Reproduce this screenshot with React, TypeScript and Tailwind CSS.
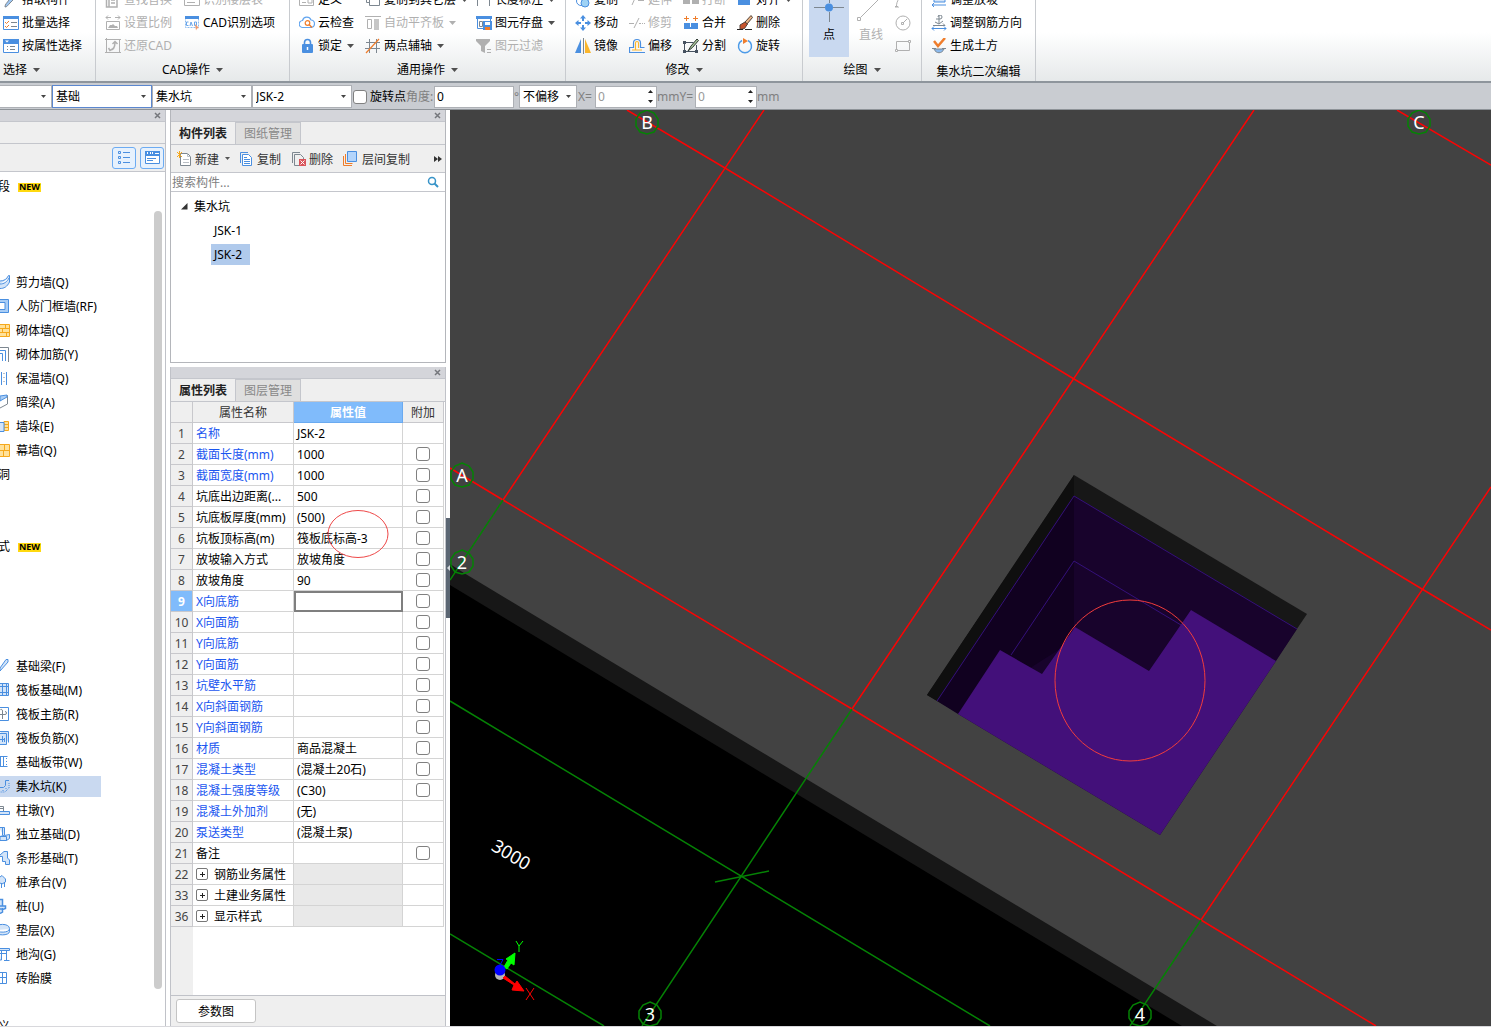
import clsx from 'clsx'
import React from 'react'

const BLUE = '#4a8fe0'
const SOFT = '#d3e4f8'
const GRAY = '#b0b0b0'
const SLATE = '#7d8790'
const ORANGE = '#ef7d2b'

function Caret({ muted = false }: { muted?: boolean }) {
  return (
    <svg width="7" height="4" viewBox="0 0 7 4" className="shrink-0">
      <path d="M0 0h7L3.5 4z" fill={muted ? GRAY : '#4f4f4f'} />
    </svg>
  )
}

function Icon({ children, size = 16 }: { children: React.ReactNode; size?: number }) {
  return (
    <svg width={size} height={size} viewBox="0 0 16 16" fill="none" className="shrink-0">
      {children}
    </svg>
  )
}

const icons: Record<string, React.ReactNode> = {
  pick: <path d="M2 15c0-3 2-4 4-7l6-6 2 2-7 7c-2 2-3 4-5 4z" fill="#9ec6f2" stroke={SLATE} />,
  batch: (
    <>
      <path d="M.5 1.500h15v13H.5z" fill="#fff" stroke={BLUE} />
      <path d="M0 1h16v3H0z" fill={BLUE} />
      <path d="M2 7l1.500 1.500L6 6M2 11l1.500 1.500L6 10" stroke={ORANGE} />
      <path d="M8 7.500h6M8 11.500h6" stroke={SLATE} />
    </>
  ),
  attr: (
    <>
      <path d="M.5 1.500h15v13H.5z" fill="#fff" stroke={BLUE} />
      <path d="M0 1h16v5H0z" fill={BLUE} />
      <path d="M2 2.500h4L4 4.500z" fill="#fff" />
      <path d="M4 8.500h1M7 8.500h5M4 11.500h1M7 11.500h5" stroke={SLATE} />
    </>
  ),
  find: <path d="M4 1h8v14H4zM6 5h4M6 8h4M6 11h4M1.500 4v11h2" stroke={GRAY} strokeWidth="1.500" />,
  scale: (
    <>
      <path d="M1 2.500h5M3 .5l-2 2 2 2M10 2.500h5M13 .5l2 2-2 2M1.500 6.500h13v8h-13z" stroke={GRAY} />
      <path d="M3 13l2-3h2l1-1 2 2h2l1 2z" fill={GRAY} />
    </>
  ),
  restore: (
    <>
      <path d="M1.500 0v15M0 1.500h16M14.500 1.500v13M0 14.500h16" stroke={GRAY} />
      <path d="M5 12c4 0 5-3 5-8M7.500 6L10 3.500 12.500 6M3.500 10L5 12.500 7.500 11" stroke={GRAY} strokeWidth="1.500" />
    </>
  ),
  floors: <path d="M.5 3.500h15v10H.5zM3 7.500h4M3 10.500h8M9 7.500h4" stroke={GRAY} />,
  cadopt: (
    <>
      <path d="M1.500 1.500h13v11h-13z" fill="#fff" stroke="#8dbbee" strokeDasharray="2 1" />
      <path d="M1 1h14v3H1z" fill={BLUE} />
      <path d="M4.500 7h-2v3.500h2M6 11l1-4 1.500 4M10.500 7h2v3.500h-2z" stroke="#6aa6ea" />
      <path d="M11 9l4 4-2 .5-1 2z" fill="#f19a6b" />
    </>
  ),
  define: <path d="M.5 1.500h14v12H.5zM3 10.500h4M9 7h4v4H9z" stroke={GRAY} />,
  cloud: (
    <>
      <path d="M4 12.500a3.500 3.500 0 0 1-.5-7A4.500 4.500 0 0 1 12 5a3.800 3.800 0 0 1 .5 7.500z" fill="#fff" stroke="#62a5ef" strokeWidth="1.200" />
      <circle cx="8.500" cy="8" r="2.300" stroke={ORANGE} strokeWidth="1.200" />
      <path d="M10 9.500l3 3" stroke={ORANGE} strokeWidth="1.400" />
    </>
  ),
  lock: (
    <>
      <path d="M5.500 7V4.500a3 3 0 0 1 6 0V7" stroke={BLUE} strokeWidth="1.600" />
      <rect x="3" y="6" width="11" height="9" rx="1" fill={BLUE} />
      <path d="M8.500 9v3" stroke="#fff" strokeWidth="1.500" />
    </>
  ),
  copyTo: <path d="M1.500 4V10.500H5M4.500 1.500h10v12h-10z" stroke={SLATE} />,
  align: (
    <>
      <path d="M0 1.500h16M2.500 4.500h4v9h-4z" stroke={GRAY} />
      <path d="M9 4h5v11H9z" fill="#c6c6c6" />
    </>
  ),
  axis: (
    <>
      <path d="M4.500 1v14M11.500 1v14M1 4.500h14M0 10.500h15" stroke={SLATE} />
      <path d="M1 15L14 1" stroke={ORANGE} strokeWidth="1.200" />
    </>
  ),
  dim: <path d="M1.500 4v10M13.500 4v10M1.500 5.500h12" stroke={SLATE} />,
  save: (
    <>
      <path d="M1.500 1.500h13v12h-13z" fill="#fff" stroke={BLUE} />
      <path d="M0 1h16v3H0z" fill={BLUE} />
      <path d="M3.500 6.500h3v5h-3z" stroke={SLATE} />
      <path d="M7 6h9v9H7z" fill={BLUE} />
      <path d="M9 7h5v3H9z" fill="#fff" />
      <path d="M9 12h5v3H9z" fill={ORANGE} />
    </>
  ),
  filter: (
    <>
      <path d="M0 1h14v2L9 8v7l-4-2V8L0 3z" fill={GRAY} />
      <path d="M11 11.500h4M11 14.500h4" stroke={GRAY} />
    </>
  ),
  copy: (
    <>
      <circle cx="6" cy="9" r="4.500" stroke={BLUE} />
      <circle cx="10" cy="11" r="4" fill="#9ed2f5" stroke={BLUE} />
    </>
  ),
  move: (
    <path
      d="M8 0l3 3.500H9V6H7V3.500H5zM8 16l3-3.500H9V10H7v2.500H5zM0 8l3.500-3v2H6v2H3.500v2zM16 8l-3.500-3v2H10v2h2.500v2z"
      fill={BLUE}
    />
  ),
  mirror: (
    <>
      <path d="M6 1v14H0z" fill={BLUE} />
      <path d="M10 1v14h6z" fill="#fbb62c" />
      <path d="M8.500 0v16" stroke={SLATE} />
    </>
  ),
  extend: <path d="M3 13L7 4M9 8.500h6" stroke={GRAY} />,
  trim: <path d="M0 8.500h5M5 13l5-10M10 8.500h2M13 8.500h1M15 8.500h1" stroke={GRAY} />,
  offset: (
    <>
      <path d="M0 14.500h16M.5 14V9.500H4.500V5a3.500 3.500 0 0 1 7 0v4.500h4" stroke={BLUE} strokeWidth="1.200" />
      <path d="M3 12h10M6.500 12V5a1.500 1.500 0 0 1 3 0v5" stroke="#fbb62c" strokeWidth="1.200" />
    </>
  ),
  breakIt: <path d="M0 2h7v10H0zM9 2h7v10H9z" fill={GRAY} />,
  merge: (
    <>
      <path d="M1 8h6v5H1zM8 8h7v5H8z" fill={BLUE} />
      <path d="M1 3.500h5M3.500 1v5M10 3.500h5M12.500 1v5" stroke={ORANGE} />
      <path d="M1 13h14" stroke={BLUE} strokeWidth="2" />
    </>
  ),
  split: (
    <>
      <path d="M1.500 4.500h9M13.500 7v6.500h-12v-9" stroke="#46515f" />
      <path d="M0 3h3v3H0zM0 12h3v3H0zM12 12h3v3h-3z" fill="#46515f" />
      <path d="M5 13L8 8l6-7 1.500 1.500-6 7z" fill="#a8c49a" stroke="#303a33" />
    </>
  ),
  alignTo: <path d="M1 2h12v11H1z" fill={BLUE} />,
  erase: (
    <>
      <path d="M8 7l6-6.500 1.500 2L10 9z" fill="#e9b384" stroke="#54433a" />
      <path d="M3 10l5-3 2.500 2-3 4.500-4.500 1z" fill="#c7532c" stroke="#54433a" />
      <path d="M0 14.500h6M8 14.500h7" stroke="#222" />
    </>
  ),
  rotate: (
    <>
      <path d="M5 2.500a6.500 6.500 0 1 0 6 0" stroke="#4c9be8" strokeWidth="1.500" />
      <path d="M6 0l5 3-5 3z" fill={ORANGE} />
    </>
  ),
  slope: <path d="M3 3h11v7H3zM1 13h14M3 11l-2 2 2 2" fill={SOFT} stroke={BLUE} />,
  rebar: (
    <>
      <path d="M8 0v9M5 4h4a2 2 0 1 0-2-2M4 7l4 2 4-3" stroke={SLATE} />
      <path d="M2 10.500h12M12 8.500l2 2" stroke={SLATE} />
      <path d="M1 13.500h14M3 11.500l-2 2 2 2M13 11.500l2 2-2 2" stroke={BLUE} />
    </>
  ),
  earth: (
    <>
      <path d="M3 3l4 5 7-8" stroke={ORANGE} strokeWidth="2.500" />
      <path d="M1 10.500h4M11 10.500h4" stroke={SLATE} />
      <path d="M3 11c2 5 8 5 10 0z" fill="#8bb9ec" stroke={SLATE} />
    </>
  ),
}

type Tool = { icon: string; text: string; off?: boolean; menu?: boolean }

function ToolColumn({ tools, className }: { tools: Tool[]; className?: string }) {
  return (
    <div className={clsx('flex shrink-0 flex-col', className)}>
      {tools.map((tool) => (
        <button key={tool.text} className={clsx('flex h-[23px] items-center gap-[3px] whitespace-nowrap', tool.off && 'text-[#b0b0b0]')}>
          <Icon>{icons[tool.icon]}</Icon>
          <span>{tool.text}</span>
          {tool.menu && (
            <span className="ml-[2px]">
              <Caret muted={tool.off} />
            </span>
          )}
        </button>
      ))}
    </div>
  )
}

function Group({ title, menu = true, className, children }: { title: string; menu?: boolean; className: string; children: React.ReactNode }) {
  return (
    <section className={clsx('flex shrink-0 flex-col border-r border-[#c8cbcf]', className)}>
      <div className="flex h-[69px]">{children}</div>
      <button className={clsx('flex h-[25px] items-center justify-center gap-[6px] self-stretch whitespace-nowrap', !menu && 'pt-1')}>
        {title}
        {menu && <Caret />}
      </button>
    </section>
  )
}

function Ribbon() {
  return (
    <header className="h-[83px] shrink-0 overflow-hidden border-b-2 border-[#8e959c] bg-linear-to-b from-white from-40% to-[#e6e9ea]">
      <div className="-mt-3 flex">
        <Group title="选择" className="w-24 pr-[52px]">
          <ToolColumn
            className="pl-[3px]"
            tools={[
              { icon: 'pick', text: '拾取构件' },
              { icon: 'batch', text: '批量选择' },
              { icon: 'attr', text: '按属性选择' },
            ]}
          />
        </Group>
        <Group title="CAD操作" className="w-[194px]">
          <ToolColumn
            className="w-[88px] pl-[9px]"
            tools={[
              { icon: 'find', text: '查找替换', off: true },
              { icon: 'scale', text: '设置比例', off: true },
              { icon: 'restore', text: '还原CAD', off: true },
            ]}
          />
          <ToolColumn
            tools={[
              { icon: 'floors', text: '识别楼层表', off: true },
              { icon: 'cadopt', text: 'CAD识别选项' },
            ]}
          />
        </Group>
        <Group title="通用操作" className="w-[276px]">
          <ToolColumn
            className="w-[75px] pl-[9px]"
            tools={[
              { icon: 'define', text: '定义' },
              { icon: 'cloud', text: '云检查' },
              { icon: 'lock', text: '锁定', menu: true },
            ]}
          />
          <ToolColumn
            className="w-[111px]"
            tools={[
              { icon: 'copyTo', text: '复制到其它层', menu: true },
              { icon: 'align', text: '自动平齐板', off: true, menu: true },
              { icon: 'axis', text: '两点辅轴', menu: true },
            ]}
          />
          <ToolColumn
            tools={[
              { icon: 'dim', text: '长度标注', menu: true },
              { icon: 'save', text: '图元存盘', menu: true },
              { icon: 'filter', text: '图元过滤', off: true },
            ]}
          />
        </Group>
        <Group title="修改" className="w-[237px]">
          <ToolColumn
            className="w-[63px] pl-[9px]"
            tools={[
              { icon: 'copy', text: '复制' },
              { icon: 'move', text: '移动' },
              { icon: 'mirror', text: '镜像' },
            ]}
          />
          <ToolColumn
            className="w-[54px]"
            tools={[
              { icon: 'extend', text: '延伸', off: true },
              { icon: 'trim', text: '修剪', off: true },
              { icon: 'offset', text: '偏移' },
            ]}
          />
          <ToolColumn
            className="w-[54px]"
            tools={[
              { icon: 'breakIt', text: '打断', off: true },
              { icon: 'merge', text: '合并' },
              { icon: 'split', text: '分割' },
            ]}
          />
          <ToolColumn
            tools={[
              { icon: 'alignTo', text: '对齐', menu: true },
              { icon: 'erase', text: '删除' },
              { icon: 'rotate', text: '旋转' },
            ]}
          />
        </Group>
        <Group title="绘图" className="w-[119px]">
          <button className="ml-[6px] flex w-10 flex-col items-center justify-end gap-[5px] bg-[#c9d9f0] pb-[14px]">
            <svg width="30" height="30" viewBox="0 0 30 30" className="shrink-0">
              <path d="M0 15.500h11M19 15.500h11M15.500 0v11M15.500 20v10" stroke={SLATE} />
              <circle cx="15" cy="15.500" r="4" fill={BLUE} />
            </svg>
            <span>点</span>
          </button>
          <button className="ml-[6px] flex w-8 flex-col items-center justify-end gap-[5px] pb-[14px] text-[#b0b0b0]">
            <svg width="30" height="30" viewBox="0 0 30 30" className="shrink-0" fill="none" stroke={GRAY}>
              <path d="M5 25L27 3M1.500 25.500h3v3h-3z" />
            </svg>
            <span>直线</span>
          </button>
          <div className="ml-2 flex flex-col">
            <button aria-label="弧" className="flex h-[23px] items-center">
              <Icon>
                <path d="M1.500 15.500C1 8 6 3 12 2M0 14.500h3v3H0z" stroke={GRAY} />
              </Icon>
            </button>
            <button aria-label="圆" className="flex h-[23px] items-center">
              <Icon>
                <circle cx="8" cy="8" r="7" stroke={GRAY} />
                <path d="M6.500 7.500h2v2h-2zM8 8l4-4" stroke={GRAY} />
              </Icon>
            </button>
            <button aria-label="矩形" className="flex h-[23px] items-center">
              <Icon>
                <path d="M1.500 3.500h13v9h-13z" stroke={GRAY} />
                <path d="M.5 11.500h2v2h-2zM13.500 2.500h2v2h-2z" fill="#fff" stroke={GRAY} />
              </Icon>
            </button>
          </div>
        </Group>
        <Group title="集水坑二次编辑" menu={false} className="w-[114px]">
          <ToolColumn
            className="pl-[9px]"
            tools={[
              { icon: 'slope', text: '调整放坡' },
              { icon: 'rebar', text: '调整钢筋方向' },
              { icon: 'earth', text: '生成土方' },
            ]}
          />
        </Group>
      </div>
    </header>
  )
}

function Combo({ value, label, className }: { value: string; label: string; className: string }) {
  return (
    <span className={clsx('relative flex h-[23px] shrink-0 border bg-white', className)}>
      <select aria-label={label} defaultValue={value} className="w-full appearance-none bg-transparent pt-px pl-[3px] outline-none">
        <option>{value}</option>
      </select>
      <span className="pointer-events-none absolute top-[9px] right-[5px]">
        <svg width="5" height="3" viewBox="0 0 5 3" className="block">
          <path d="M0 0h5L2.500 3z" fill="#444" />
        </svg>
      </span>
    </span>
  )
}

function Spinner({ label }: { label: string }) {
  return (
    <span className="flex h-[22px] w-[62px] shrink-0 border border-[#adb0b5] bg-white">
      <input aria-label={label} defaultValue="0" className="w-12 pt-px pl-[2px] text-[#9a9a9a] outline-none" />
      <span className="flex flex-1 flex-col items-center justify-center gap-[7px]">
        <button aria-label={label + '加'}>
          <svg width="5" height="3" viewBox="0 0 5 3" className="block">
            <path d="M0 3h5L2.500 0z" fill="#222" />
          </svg>
        </button>
        <button aria-label={label + '减'}>
          <svg width="5" height="3" viewBox="0 0 5 3" className="block">
            <path d="M0 0h5L2.500 3z" fill="#222" />
          </svg>
        </button>
      </span>
    </span>
  )
}

function OptionsBar() {
  return (
    <div className="flex h-[27px] shrink-0 items-center overflow-hidden border-b border-[#8e9398] bg-[#c9ccd1] pt-px whitespace-nowrap text-[#808080]">
      <div className="flex text-black">
        <Combo label="楼层" value="" className="w-[52px] border-l-0 border-[#adb0b5]" />
        <Combo label="类别" value="基础" className="w-[100px] border-[#5b87cf]" />
        <Combo label="类型" value="集水坑" className="w-[100px] border-[#adb0b5]" />
        <Combo label="构件" value="JSK-2" className="w-[100px] border-[#adb0b5]" />
      </div>
      <label className="ml-[1px] flex items-center gap-[3px] text-black">
        <input type="checkbox" className="size-[14px] appearance-none rounded-[3px] border border-[#808080] bg-white" />
        旋转点
      </label>
      <label className="flex items-center">
        <span className="w-7">角度:</span>
        <input defaultValue="0" className="h-[22px] w-20 border border-[#adb0b5] bg-white pl-[2px] text-black outline-none" />
      </label>
      <span className="w-[5px]">°</span>
      <Combo label="偏移方式" value="不偏移" className="w-[58px] border-[#adb0b5] text-black" />
      <span className="w-[18px] pl-[1px]">X=</span>
      <Spinner label="X偏移" />
      <span className="w-[38px]">mmY=</span>
      <Spinner label="Y偏移" />
      <span>mm</span>
    </div>
  )
}

function CloseButton() {
  return (
    <button aria-label="关闭" className="mr-1">
      <svg width="7" height="7" viewBox="0 0 7 7" className="block">
        <path d="M1 1l5 5M6 1L1 6" stroke="#75777c" strokeWidth="1.500" />
      </svg>
    </button>
  )
}

function TitleStrip() {
  return (
    <div className="flex h-3 shrink-0 items-center justify-end border-b border-[#c4c6cc] bg-[#d4d5da]">
      <CloseButton />
    </div>
  )
}

type NavItem = { text?: string; stub?: string; fresh?: boolean; icon?: React.ReactNode; current?: boolean }

// only the right part of each glyph is inside the window, the rest is scrolled away
const navItems: NavItem[] = [
  { stub: '段', fresh: true },
  {},
  {},
  {},
  { text: '剪力墙(Q)', icon: <path d="M0 7C4 7 7 5 8.500 1.500h1V8C7 13 4 14.500 0 14.500M0 10c4 0 7-2 9-6" fill={SOFT} stroke={BLUE} /> },
  {
    text: '人防门框墙(RF)',
    icon: (
      <>
        <path d="M-4 1.500H8.500v13H-4z" fill="#a9cdf5" stroke={BLUE} />
        <path d="M-4 4.500h9v7h-9z" fill="#fff" stroke={BLUE} />
      </>
    ),
  },
  { text: '砌体墙(Q)', icon: <path d="M-4 2.500H9.500v12H-4zM0 6.500h9.500M0 10.500h9.500M5.500 2.500v4M2.500 6.500v4M6.500 10.500v4" fill="#ffe19a" stroke="#f5a81c" /> },
  {
    text: '砌体加筋(Y)',
    icon: (
      <>
        <path d="M0 1.500h8.500V16" stroke={SLATE} />
        <path d="M0 4.500h5.500V15M0 7.500h2.500V15" stroke={BLUE} />
      </>
    ),
  },
  {
    text: '保温墙(Q)',
    icon: (
      <>
        <path d="M1.500 2v13M6.500 2v13" stroke={BLUE} />
        <path d="M4 3v1M4 7v1M4 11v1" stroke={SLATE} />
      </>
    ),
  },
  {
    text: '暗梁(A)',
    icon: (
      <>
        <path d="M0 6l7.500-4.500V10L0 14" fill="#fff" stroke={SLATE} />
        <path d="M0 2l7-1v2L0 7z" fill="#a9cdf5" stroke={BLUE} />
      </>
    ),
  },
  {
    text: '墙垛(E)',
    icon: (
      <>
        <path d="M4 3.500h4.500v9H4zM4 6.500h4.500M4 9.500h4.500" fill="#ffe19a" stroke="#f5a81c" />
        <path d="M-2 4.500h6v9h-6z" fill={SOFT} stroke={BLUE} />
      </>
    ),
  },
  { text: '幕墙(Q)', icon: <path d="M-4 2.500H9.500v12H-4zM0 8.500h9.500M4.500 2.500v6M3.500 8.500v6" fill="#ffe19a" stroke="#f5a81c" /> },
  { stub: '洞' },
  {},
  {},
  { stub: '式', fresh: true },
  {},
  {},
  {},
  {},
  { text: '基础梁(F)', icon: <path d="M0 10l6-8.500h2V4L0 13z" fill={SOFT} stroke={BLUE} /> },
  { text: '筏板基础(M)', icon: <path d="M-4 1.500H8.500v12H-4zM0 4.500h8.500M0 10.500h8.500M2.500 1.500v12M6.500 1.500v12" fill={SOFT} stroke={BLUE} /> },
  {
    text: '筏板主筋(R)',
    icon: (
      <>
        <path d="M-4 1.500H8.500v13H-4z" fill="#fff" stroke={BLUE} />
        <path d="M0 8.500h5a1.500 1.500 0 0 0 0-3M2.500 13V5c0-2-2-2-2-1" stroke={SLATE} />
      </>
    ),
  },
  { text: '筏板负筋(X)', icon: <path d="M-4 3.500H6.500v11H-4zM0 1.500h8.500v11M-1 9.500h5M2.500 6v6M4.500 8v4" fill={SOFT} stroke={BLUE} /> },
  { text: '基础板带(W)', icon: <path d="M-2 2.500H7.500M-2 12.500H7.500M.5 2.500v10M3.500 2.500v10M6.500 4v1M6.500 7v1M6.500 10v1" fill={SOFT} stroke={BLUE} /> },
  {
    text: '集水坑(K)',
    current: true,
    icon: (
      <>
        <path d="M9 2.500H5.500v5l-2 2H0" stroke={BLUE} />
        <path d="M9 5v5l-4 4H0M6 10v1M3 12v1" stroke={BLUE} strokeDasharray="1 1" />
      </>
    ),
  },
  {
    text: '柱墩(Y)',
    icon: (
      <>
        <path d="M0 4.500h3.500v5M0 6.500h4" stroke={SLATE} />
        <path d="M-2 9.500h11.500v3H-2z" fill={SOFT} stroke={BLUE} />
      </>
    ),
  },
  { text: '独立基础(D)', icon: <path d="M-1 1.500h5.500v8l5-1v4l-3 2H0v-4h6.500v4M0 10.500l4-1M2.500 1.500v8" fill={SOFT} stroke={BLUE} /> },
  { text: '条形基础(T)', icon: <path d="M0 5l4-3.500h3.500V8l2 2v4.500h-4v-3h-3v-5H0" fill={SOFT} stroke={BLUE} /> },
  { text: '桩承台(V)', icon: <path d="M0 3l2-1.500L5.500 5v3L2 10l-2-1M1.500 9v5M4.500 8v5" fill={SOFT} stroke={BLUE} /> },
  { text: '桩(U)', icon: <path d="M0 1.500h2.500V8h3v2.500l-3 1V14L0 15.500M0 8h2M0 11h3" fill={SOFT} stroke={BLUE} strokeWidth="1.500" /> },
  { text: '垫层(X)', icon: <path d="M-6 6.500C-4 1 9.500 1 9.500 6.500v3C9.500 14-4 14-6 9.500zM-5 8c3 3 14 3 14.500-1" fill={SOFT} stroke={BLUE} /> },
  { text: '地沟(G)', icon: <path d="M0 2.500h9.500v2H0M1.500 5v9H0M6.500 5v9M4 14.500h5.500M0 7.500h6" fill={SOFT} stroke={BLUE} /> },
  { text: '砖胎膜', icon: <path d="M-4 2.500H6.500v11H-4zM0 7.500h6.500M2.500 2.500v11" stroke={BLUE} /> },
  {},
  { stub: '义' },
]

function NavPane() {
  return (
    <nav className="relative flex w-[166px] shrink-0 flex-col border-r border-[#c0c2c8] bg-white">
      <TitleStrip />
      <div className="h-[22px] shrink-0 border-b border-[#c4c6cc] bg-[#efefef]" />
      <div className="flex h-7 shrink-0 items-center justify-end gap-1 border-b border-[#c4c6cc] bg-[#efefef] pr-px">
        <button aria-label="列表" className="flex h-[22px] w-6 items-center justify-center rounded-[3px] border border-[#6cabf2] bg-[#e6f1fd]">
          <svg width="12" height="13" viewBox="0 0 12 13" fill="none" stroke={BLUE}>
            <path d="M.5.5h2v2h-2zM.5 5.500h2v2h-2zM.5 10.500h2v2h-2zM5 1.500h7M5 6.500h7M5 11.500h7" />
          </svg>
        </button>
        <button aria-label="面板" className="flex h-[22px] w-6 items-center justify-center rounded-[3px] border border-[#6cabf2] bg-[#e6f1fd]">
          <svg width="15" height="13" viewBox="0 0 15 13" fill="none">
            <path d="M.5.5h14v12H.5z" fill="#fff" stroke={BLUE} />
            <path d="M0 0h15v5H0z" fill={BLUE} />
            <path d="M2.500 1v2M5.500 1v2M7.500 1v2M10 2.500h4" stroke="#fff" />
            <path d="M2 7.500h9M2 9.500h6" stroke={BLUE} />
          </svg>
        </button>
      </div>
      <ul className="min-h-0 flex-1 overflow-hidden pt-[2px]">
        {navItems.map((item, i) => (
          <li key={i} className="flex h-6 items-center">
            {item.stub && (
              <span className="flex items-center gap-2 pt-[2px]">
                <span className="flex w-[10px] justify-end overflow-hidden">
                  <span>{item.stub}</span>
                </span>
                {item.fresh && <span className="flex h-[9px] items-center bg-[#ffd90f] px-px text-[9px] font-bold">NEW</span>}
              </span>
            )}
            {item.text && (
              <a href="#" className={clsx('flex h-[21px] w-[101px] items-center gap-[6px] whitespace-nowrap', item.current && 'bg-[#c9d9f0]')}>
                <svg width="10" height="16" viewBox="0 0 10 16" fill="none" className="shrink-0">
                  {item.icon}
                </svg>
                <span className="pt-[2px]">{item.text}</span>
              </a>
            )}
          </li>
        ))}
      </ul>
      <div className="absolute top-[101px] right-[3px] bottom-[37px] w-2 rounded-full bg-[#cccccc]" />
    </nav>
  )
}

function Tabs({ active, other }: { active: string; other: string }) {
  return (
    <div className="flex h-[23px] shrink-0 border-b border-[#c4c6cc] bg-[#efefef]">
      <button className="w-[65px] border-r border-[#c4c6cc] pt-[2px] font-bold text-[#222]">{active}</button>
      <button className="w-[65px] border-t border-r border-[#c4c6cc] bg-[#dfdfdf] pt-px text-[#888]">{other}</button>
    </div>
  )
}

function ComponentPanel() {
  return (
    <section className="flex h-[253px] shrink-0 flex-col border border-t-0 border-[#b4b6bb] bg-white">
      <TitleStrip />
      <Tabs active="构件列表" other="图纸管理" />
      <div className="flex h-7 shrink-0 items-center border-b border-[#c4c6cc] bg-[#efefef] pl-[6px] whitespace-nowrap text-[#333]">
        <button className="flex w-[62px] items-center gap-[2px]">
          <Icon>
            <path d="M3.500 2.500h7l3 3v9h-10z" fill="#fff" stroke={SLATE} />
            <path d="M10.500 2.500v3h3M6 8.500h6M6 11.500h6" stroke="#b9bec4" />
            <path d="M0 1l5 5M5 1L0 6M2.500 0v7" stroke="#f5a81c" />
          </Icon>
          <span className="pt-[2px]">新建</span>
          <span className="ml-1">
            <svg width="5" height="3" viewBox="0 0 5 3" className="block">
              <path d="M0 0h5L2.500 3z" fill="#555" />
            </svg>
          </span>
        </button>
        <button className="flex w-[52px] items-center gap-[2px]">
          <Icon>
            <path d="M1.500 12V1.500H9" stroke={BLUE} />
            <path d="M3.500 3.500h6l3 3v8h-9z" fill="#fff" stroke={BLUE} />
            <path d="M5 8.500h6M5 10.500h6M5 12.500h6M5 6.500h3" stroke={BLUE} />
          </Icon>
          <span className="pt-[2px]">复制</span>
        </button>
        <button className="flex w-[52px] items-center gap-[2px]">
          <Icon>
            <path d="M1.500 12V1.500H9M3.500 14.500v-11h6l3 3V9M3.500 14.500H8" stroke={SLATE} />
            <path d="M8 8h7v7H8z" fill="#d9545a" />
            <path d="M9.500 9.500l4 4M13.500 9.500l-4 4" stroke="#fff" />
          </Icon>
          <span className="pt-[2px]">删除</span>
        </button>
        <button className="flex items-center gap-[3px]">
          <Icon>
            <path d="M.5 5v9.500H9" stroke={ORANGE} />
            <path d="M2.500 3v9.500h7" stroke={ORANGE} />
            <path d="M4.500 .5h9v10h-9z" fill="#b4d5fb" stroke={BLUE} />
          </Icon>
          <span className="pt-[2px]">层间复制</span>
        </button>
        <button aria-label="更多" className="mr-[3px] ml-auto">
          <svg width="8" height="6" viewBox="0 0 8 6" className="block">
            <path d="M0 0l4 3-4 3zM4 0l4 3-4 3z" fill="#333" />
          </svg>
        </button>
      </div>
      <div className="flex h-[19px] shrink-0 items-center border-b border-[#c4c6cc] pr-[6px]">
        <input aria-label="搜索构件" placeholder="搜索构件..." className="h-full min-w-0 flex-1 pt-px pl-px outline-none placeholder:text-[#808080]" />
        <svg width="12" height="12" viewBox="0 0 12 12" fill="none" stroke="#3793c8">
          <circle cx="5" cy="5" r="3.500" strokeWidth="1.500" />
          <path d="M7.500 7.500L11 11" strokeWidth="2" />
        </svg>
      </div>
      <ul className="pt-[2px]">
        <li className="flex h-6 items-center gap-[6px] pl-[10px]">
          <svg width="7" height="7" viewBox="0 0 7 7">
            <path d="M0 6.500L6.500 0v6.500z" fill="#333" />
          </svg>
          <span className="pt-[2px]">集水坑</span>
        </li>
        <li className="flex h-6 items-center pl-10">
          <button className="h-[21px] w-[39px] pt-[2px] pl-[3px] text-left">JSK-1</button>
        </li>
        <li className="flex h-6 items-center pl-10">
          <button className="h-[21px] w-[39px] bg-[#b0caec] pt-[2px] pl-[3px] text-left">JSK-2</button>
        </li>
      </ul>
    </section>
  )
}

type Row = { no: number; name: string; value?: string; blue?: boolean; tick?: boolean; group?: boolean }

const rows: Row[] = [
  { no: 1, name: '名称', value: 'JSK-2', blue: true },
  { no: 2, name: '截面长度(mm)', value: '1000', blue: true, tick: true },
  { no: 3, name: '截面宽度(mm)', value: '1000', blue: true, tick: true },
  { no: 4, name: '坑底出边距离(...', value: '500', tick: true },
  { no: 5, name: '坑底板厚度(mm)', value: '(500)', tick: true },
  { no: 6, name: '坑板顶标高(m)', value: '筏板底标高-3', tick: true },
  { no: 7, name: '放坡输入方式', value: '放坡角度', tick: true },
  { no: 8, name: '放坡角度', value: '90', tick: true },
  { no: 9, name: 'X向底筋', blue: true, tick: true },
  { no: 10, name: 'X向面筋', blue: true, tick: true },
  { no: 11, name: 'Y向底筋', blue: true, tick: true },
  { no: 12, name: 'Y向面筋', blue: true, tick: true },
  { no: 13, name: '坑壁水平筋', blue: true, tick: true },
  { no: 14, name: 'X向斜面钢筋', blue: true, tick: true },
  { no: 15, name: 'Y向斜面钢筋', blue: true, tick: true },
  { no: 16, name: '材质', value: '商品混凝土', blue: true, tick: true },
  { no: 17, name: '混凝土类型', value: '(混凝土20石)', blue: true, tick: true },
  { no: 18, name: '混凝土强度等级', value: '(C30)', blue: true, tick: true },
  { no: 19, name: '混凝土外加剂', value: '(无)', blue: true },
  { no: 20, name: '泵送类型', value: '(混凝土泵)', blue: true },
  { no: 21, name: '备注', tick: true },
  { no: 22, name: '钢筋业务属性', group: true },
  { no: 33, name: '土建业务属性', group: true },
  { no: 36, name: '显示样式', group: true },
]

function PropertyTable() {
  return (
    <table className="w-[273px] table-fixed border-separate border-spacing-0 whitespace-nowrap">
      <colgroup>
        <col className="w-[22px]" />
        <col className="w-[101px]" />
        <col className="w-[109px]" />
        <col className="w-[41px]" />
      </colgroup>
      <thead>
        <tr className="h-[21px] text-[#333]">
          <th className="border-r border-b border-[#c8c8cc] bg-[#efefef]" />
          <th className="border-r border-b border-[#c8c8cc] bg-[#efefef] p-0 pt-[2px] font-normal">属性名称</th>
          <th className="border-r border-b border-[#6aaaf0] bg-[#80bbfb] p-0 pt-[2px] font-bold text-white">属性值</th>
          <th className="border-r border-b border-[#c8c8cc] bg-[#efefef] p-0 pt-[2px] font-normal">附加</th>
        </tr>
      </thead>
      <tbody>
        {rows.map((row) => (
          <tr key={row.no} className="h-[21px]">
            <td
              className={clsx(
                'border-r border-b border-[#c8c8cc] p-0 pt-[2px] text-center',
                row.no === 9 ? 'bg-[#80bbfb] font-bold text-white' : 'bg-[#efefef] text-[#444]',
              )}
            >
              {row.no}
            </td>
            <td className={clsx('border-r border-b border-[#d4d4d4] p-0 pl-[3px]', row.blue && 'text-[#1a56f0]', !row.group && 'pt-[2px]')}>
              {row.group ? (
                <span className="flex items-center gap-[6px]">
                  <button aria-label={'展开' + row.name} className="flex size-3 items-center justify-center rounded-[2px] border border-[#777]">
                    <svg width="5" height="5" viewBox="0 0 5 5">
                      <path d="M0 2.500h5M2.500 0v5" stroke="#222" />
                    </svg>
                  </button>
                  <span className="pt-[2px]">{row.name}</span>
                </span>
              ) : (
                row.name
              )}
            </td>
            <td
              className={clsx(
                row.no === 9 ? 'border-2 border-[#7f7f7f] p-0' : 'border-r border-b border-[#d4d4d4] p-0 pt-[2px] pl-[3px]',
                row.group && 'bg-[#e9e9e9]',
              )}
            >
              {row.value}
            </td>
            <td className="border-r border-b border-[#d4d4d4] p-0">
              {row.tick && (
                <input
                  type="checkbox"
                  aria-label={row.name + '附加'}
                  className="mx-auto block size-[14px] appearance-none rounded-[3px] border border-[#808080] bg-white"
                />
              )}
            </td>
          </tr>
        ))}
      </tbody>
    </table>
  )
}

function PropertyPanel() {
  return (
    <section className="relative mt-1 flex min-h-0 flex-1 flex-col border-x border-[#c0c2c8] bg-[#efefef]">
      <TitleStrip />
      <Tabs active="属性列表" other="图层管理" />
      <div className="flex min-h-0 flex-1 flex-col overflow-hidden border-b border-[#c0c2c8] bg-white">
        <PropertyTable />
        <div className="w-[22px] flex-1 bg-[#efefef]" />
      </div>
      <div className="flex h-[30px] shrink-0 items-center pl-[5px]">
        <button className="h-6 w-20 rounded-[3px] border border-[#c4c4c4] bg-white pt-px">参数图</button>
      </div>
      <svg width="62" height="48" viewBox="0 0 62 48" fill="none" className="pointer-events-none absolute top-[143px] left-[156px]">
        <ellipse cx="31" cy="24" rx="30" ry="23.500" stroke="#ee4848" />
      </svg>
    </section>
  )
}

const bubbles = [
  { x: 647, y: 122, text: 'B' },
  { x: 1419, y: 122, text: 'C' },
  { x: 462, y: 475, text: 'A' },
  { x: 462, y: 562, text: '2' },
  { x: 650, y: 1014, text: '3' },
  { x: 1140, y: 1014, text: '4' },
]

function Viewport() {
  return (
    <main className="min-w-0 flex-1 bg-[#424242]">
      <svg className="block h-full w-full" viewBox="450 110 1041 916" preserveAspectRatio="xMinYMin slice" fill="none">
        {/* raft slab */}
        <path d="M450 110h1041v916H450z" fill="#424242" />
        <path d="M450 564L464 573L1217 1026H450z" fill="#171717" />
        <path d="M450 585L1182 1026H450z" fill="#000" />

        {/* sump pit */}
        <path d="M1074 475L1307 614L1276 660L958 713L927 695z" fill="#171717" />
        <path d="M1074 475V496L937 701L927 695z" fill="#0f0f0f" />
        <path d="M1074 496L1297 629L1276 661L1160 835L958 714L1040 640z" fill="#18032c" />
        <path d="M1074 496V640L958 714L937 701z" fill="#110120" />
        <path d="M937 701L1074 496L1297 629" stroke="#34107a" />
        <path d="M1011 655L1074 561L1181 625" stroke="#34107a" />
        <path d="M958 714L1000 650L1042 674L1075 627L1149 671L1191 610L1276 661L1160 835z" fill="#43107a" />

        {/* axis grid */}
        <g stroke="#fa0404" strokeWidth="1.500">
          <path d="M450 468L503 500L852 709L1201 920L1376 1026" />
          <path d="M627 110L725 168L1074 379L1422 589L1491 630" />
          <path d="M1397 110L1491 165" />
          <path d="M503 500L764 110M852 709L1254 110M1201 920L1491 487" />
        </g>
        <g stroke="#058205" strokeWidth="1.500">
          <path d="M503 500L450 580M852 709L642 1026M1201 920L1130 1026" />
          <path d="M450 701L990 1026M450 934L604 1026M715 882L769 871" />
        </g>

        {bubbles.map((b) => (
          <g key={b.text}>
            <path
              d="M0 -12L7 -9L11 -3L11 4L7 10L0 12L-7 10L-11 4L-11 -3L-7 -9z"
              transform={`translate(${b.x} ${b.y})`}
              stroke="#058205"
              strokeWidth="1.500"
            />
            <text x={b.x} y={b.y + 7} textAnchor="middle" fontSize="18" fill="#fff">
              {b.text}
            </text>
          </g>
        ))}
        <text x="511" y="861" textAnchor="middle" fontSize="18" fill="#fff" transform="rotate(31 511 855)">
          3000
        </text>

        {/* coordinate triad */}
        <circle cx="500" cy="975" r="5" fill="#b5b5b5" />
        <path d="M503 978L514 985L512 990L524 991L517 981L515 984L505 976z" fill="#f00" stroke="#f00" />
        <path d="M504 967L508 960L506 959L515 953L514 965L511 963L507 969z" fill="#0f0" stroke="#0f0" />
        <circle cx="500" cy="970" r="5.500" fill="#00f" />
        <path d="M497 959.500h6L500 965" stroke="#00f" />
        <path d="M516 941l3 5 4-5M519 946v6" stroke="#0f0" />
        <path d="M526 988l8 12M534 988l-8 12" stroke="#f00" />

        <ellipse cx="1130" cy="680.500" rx="75" ry="80.500" stroke="#f23c3c" />
      </svg>
    </main>
  )
}

function App() {
  return (
    <div className="flex h-screen flex-col overflow-hidden bg-white font-['Noto_Sans','Noto_Sans_CJK_SC',sans-serif] text-[12px] leading-4 text-black">
      <Ribbon />
      <OptionsBar />
      <div className="flex min-h-0 flex-1 border-b border-[#d8d8dc]">
        <NavPane />
        <div className="ml-1 flex w-[276px] shrink-0 flex-col">
          <ComponentPanel />
          <PropertyPanel />
        </div>
        <div className="flex w-1 shrink-0 items-center">
          <button aria-label="收起" className="flex h-[100px] w-1 items-center bg-[#5b6673]">
            <svg width="4" height="6" viewBox="0 0 4 6">
              <path d="M4 0v6L1 3z" fill="#d5d9de" />
            </svg>
          </button>
        </div>
        <Viewport />
      </div>
    </div>
  )
}

export default App
